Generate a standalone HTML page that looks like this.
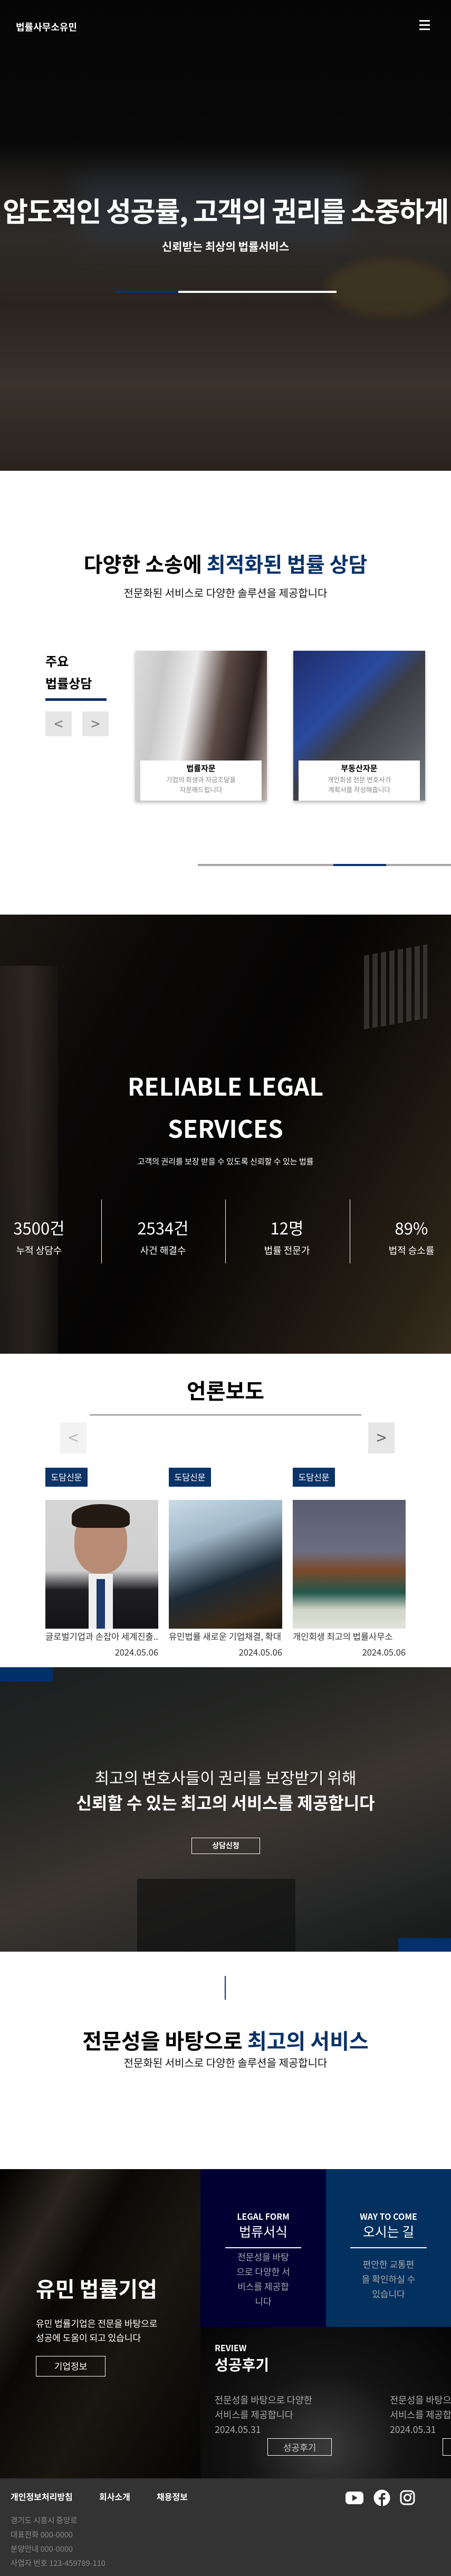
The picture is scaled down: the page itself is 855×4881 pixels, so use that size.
<!DOCTYPE html>
<html><head><meta charset="utf-8">
<style>
*{margin:0;padding:0;box-sizing:border-box}
body{width:855px;height:4881px;position:relative;font-family:"Noto Sans CJK KR","Liberation Sans",sans-serif;background:#fff;overflow:hidden}
.a{position:absolute}
.c{position:absolute;left:0;width:855px;text-align:center}
.blue{color:#0a3268}
.st{position:absolute;width:200px;text-align:center;color:#fff}
.st b{display:block;font-size:31px;font-weight:normal;line-height:40px}
.st i{display:block;font-style:normal;font-size:18px;margin-top:10px}
</style></head><body>

<!-- HERO -->
<div class="a" style="left:0;top:0;width:855px;height:892px;background:linear-gradient(180deg,#050505 0%,#080808 30%,#1e1d1c 38%,#2e2b28 50%,#29241f 65%,#3a322b 82%,#2a231d 100%)"></div>
<div class="a" style="left:150px;top:340px;width:520px;height:120px;background:#2f3945;opacity:.5;filter:blur(25px)"></div>
<div class="a" style="left:620px;top:490px;width:235px;height:110px;border-radius:50%;background:#4a3d20;opacity:.55;filter:blur(8px)"></div>
<div class="a" style="left:30px;top:38px;color:#fff;font-size:18px;font-weight:bold">법률사무소유민</div>
<div class="a" style="left:795px;top:38px;width:20px;height:3px;background:#fff;box-shadow:0 8px 0 #fff,0 16px 0 #fff"></div>
<div class="c" style="top:360px;color:#fff;font-size:52px;font-weight:bold;white-space:nowrap;letter-spacing:-1.5px;left:-20px;width:895px">압도적인 성공률, 고객의 권리를 소중하게</div>
<div class="c" style="top:452px;color:#fff;font-size:21px;font-weight:bold">신뢰받는 최상의 법률서비스</div>
<div class="a" style="left:218px;top:551px;width:120px;height:4px;background:#0a3268"></div>
<div class="a" style="left:338px;top:551px;width:300px;height:4px;background:#fff"></div>

<!-- SECTION 2 -->
<div class="c" style="top:1040px;font-size:39px;font-weight:bold;color:#000">다양한 소송에 <span class="blue">최적화된 법률 상담</span></div>
<div class="c" style="top:1108px;font-size:20px;color:#111">전문화된 서비스로 다양한 솔루션을 제공합니다</div>
<div class="a" style="left:86px;top:1231px;font-size:24px;font-weight:bold;line-height:42px;color:#000">주요<br>법률상담</div>
<div class="a" style="left:86px;top:1323px;width:116px;height:5px;background:#0a3268"></div>
<div class="a" style="left:86px;top:1348px;width:50px;height:47px;background:#e6e6e6;color:#777;font-size:30px;text-align:center;line-height:44px">&lt;</div>
<div class="a" style="left:156px;top:1348px;width:50px;height:47px;background:#e6e6e6;color:#777;font-size:30px;text-align:center;line-height:44px">&gt;</div>
<div class="a" style="left:256px;top:1233px;width:250px;height:284px;background:linear-gradient(100deg,#ddd 0%,#c9c9c9 20%,#eee 40%,#5c4b45 60%,#2a201d 80%,#c8b8b4 100%);box-shadow:0 4px 6px rgba(0,0,0,.25)"></div>
<div class="a" style="left:556px;top:1233px;width:250px;height:284px;background:linear-gradient(135deg,#1f2c6b 0%,#2a4aa0 35%,#3c3d45 50%,#55585e 75%,#7a8088 100%);box-shadow:0 4px 6px rgba(0,0,0,.25)"></div>
<div class="a" style="left:266px;top:1441px;width:230px;height:76px;background:#fff;text-align:center;padding-top:4px">
<div style="font-size:15px;font-weight:bold;color:#000;line-height:22px">법률자문</div>
<div style="font-size:12.5px;color:#888;line-height:19px">기업의 회생과 자금조달을<br>자문해드립니다</div></div>
<div class="a" style="left:566px;top:1441px;width:230px;height:76px;background:#fff;text-align:center;padding-top:4px">
<div style="font-size:15px;font-weight:bold;color:#000;line-height:22px">부동산자문</div>
<div style="font-size:12.5px;color:#888;line-height:19px">개인회생 전문 변호사가<br>계획서를 작성해줍니다</div></div>
<div class="a" style="left:375px;top:1637px;width:480px;height:4px;background:#aaa6a6"></div>
<div class="a" style="left:632px;top:1637px;width:100px;height:4px;background:#0a3268"></div>

<!-- DARK SECTION -->
<div class="a" style="left:0;top:1733px;width:855px;height:832px;background:linear-gradient(120deg,#1a1612 0%,#0b0908 25%,#050404 50%,#17130d 70%,#2a2216 90%,#3a2f1f 100%)"></div>
<div class="a" style="left:0;top:1830px;width:110px;height:735px;background:linear-gradient(90deg,#2a2521,#3d3630,#1a1714);opacity:.6"></div>
<div class="a" style="left:690px;top:1800px;width:120px;height:140px;background:repeating-linear-gradient(90deg,#555 0 10px,transparent 10px 16px);opacity:.5;transform:skewY(-10deg)"></div>
<div class="c" style="top:2017px;color:#fff;font-size:46px;font-weight:bold;line-height:80px">RELIABLE LEGAL<br>SERVICES</div>
<div class="c" style="top:2190px;color:#fff;font-size:15px">고객의 권리를 보장 받을 수 있도록 신뢰할 수 있는 법률</div>
<div class="a" style="left:192px;top:2273px;width:1px;height:121px;background:#fff"></div>
<div class="a" style="left:427px;top:2273px;width:1px;height:121px;background:#fff"></div>
<div class="a" style="left:663px;top:2273px;width:1px;height:121px;background:#fff"></div>
<div class="st" style="left:-26px;top:2306px"><b>3500건</b><i>누적 상담수</i></div>
<div class="st" style="left:209px;top:2306px"><b>2534건</b><i>사건 해결수</i></div>
<div class="st" style="left:444px;top:2306px"><b>12명</b><i>법률 전문가</i></div>
<div class="st" style="left:680px;top:2306px"><b>89%</b><i>법적 승소률</i></div>

<!-- PRESS -->
<div class="c" style="top:2604px;font-size:40px;font-weight:bold;color:#000">언론보도</div>
<div class="a" style="left:170px;top:2680px;width:515px;height:2px;background:#888"></div>
<div class="a" style="left:114px;top:2695px;width:50px;height:59px;background:#f2f2f2;color:#bbb;font-size:34px;text-align:center;line-height:56px">&lt;</div>
<div class="a" style="left:698px;top:2695px;width:50px;height:59px;background:#e6e6e6;color:#666;font-size:34px;text-align:center;line-height:56px">&gt;</div>
<div class="a" style="left:86px;top:2781px;width:80px;height:36px;background:#0a3468;color:#fff;font-size:16px;text-align:center;line-height:34px">도담신문</div>
<div class="a" style="left:320px;top:2781px;width:80px;height:36px;background:#0a3468;color:#fff;font-size:16px;text-align:center;line-height:34px">도담신문</div>
<div class="a" style="left:555px;top:2781px;width:80px;height:36px;background:#0a3468;color:#fff;font-size:16px;text-align:center;line-height:34px">도담신문</div>
<div class="a" style="left:86px;top:2842px;width:214px;height:244px;overflow:hidden;background:linear-gradient(180deg,#d5d5d5 0%,#cfcfcf 55%,#1e1e22 70%,#141418 100%)"><div style="position:absolute;left:55px;top:20px;width:100px;height:120px;border-radius:45%;background:#b88c74"></div><div style="position:absolute;left:50px;top:8px;width:110px;height:45px;border-radius:50% 50% 20% 20%;background:#241a14"></div><div style="position:absolute;left:82px;top:140px;width:46px;height:110px;background:#eee"></div><div style="position:absolute;left:97px;top:150px;width:16px;height:100px;background:#1e3a6a"></div></div>
<div class="a" style="left:320px;top:2842px;width:215px;height:244px;background:linear-gradient(160deg,#c9dbe6 0%,#9fb7c8 30%,#1d2a35 60%,#3a2a18 85%,#1a140e 100%)"></div>
<div class="a" style="left:555px;top:2842px;width:214px;height:244px;background:linear-gradient(180deg,#5a5c70 0%,#6b6d80 40%,#7a4a2c 55%,#23574a 72%,#cfd4c6 85%,#e2e4da 100%)"></div>
<div class="a" style="left:86px;top:3088px;width:214px;font-size:16.5px;color:#333;white-space:nowrap;overflow:hidden">글로벌기업과 손잡아 세계진출...</div>
<div class="a" style="left:320px;top:3088px;width:215px;font-size:16.5px;color:#333;white-space:nowrap;overflow:hidden">유민법률 새로운 기업채결, 확대</div>
<div class="a" style="left:555px;top:3088px;width:214px;font-size:16.5px;color:#333;white-space:nowrap;overflow:hidden">개인회생 최고의 법률사무소</div>
<div class="a" style="left:86px;top:3118px;width:214px;text-align:right;font-size:16.5px;color:#333">2024.05.06</div>
<div class="a" style="left:320px;top:3118px;width:215px;text-align:right;font-size:16.5px;color:#333">2024.05.06</div>
<div class="a" style="left:555px;top:3118px;width:214px;text-align:right;font-size:16.5px;color:#333">2024.05.06</div>

<!-- CTA -->
<div class="a" style="left:0;top:3159px;width:855px;height:539px;background:linear-gradient(160deg,#1c1f20 0%,#252624 30%,#3a3530 55%,#2a2a2a 75%,#151818 100%)"></div>
<div class="a" style="left:260px;top:3560px;width:300px;height:138px;background:#111;opacity:.7"></div>
<div class="a" style="left:0;top:3159px;width:100px;height:27px;background:#02306a"></div>
<div class="a" style="left:755px;top:3672px;width:100px;height:26px;background:#02306a"></div>
<div class="c" style="top:3345px;color:#fff;font-size:30px">최고의 변호사들이 권리를 보장받기 위해</div>
<div class="c" style="top:3392px;color:#fff;font-size:32px;font-weight:bold">신뢰할 수 있는 최고의 서비스를 제공합니다</div>
<div class="a" style="left:363px;top:3482px;width:130px;height:31px;border:1px solid #fff;color:#fff;font-size:14px;font-weight:bold;text-align:center;line-height:29px">상담신청</div>
<div class="a" style="left:426px;top:3744px;width:2px;height:45px;background:#0a3268"></div>
<div class="c" style="top:3836px;font-size:40px;font-weight:bold;color:#000">전문성을 바탕으로 <span class="blue">최고의 서비스</span></div>
<div class="c" style="top:3893px;font-size:20px;color:#111">전문화된 서비스로 다양한 솔루션을 제공합니다</div>

<!-- BOTTOM -->
<div class="a" style="left:0;top:4110px;width:380px;height:586px;background:linear-gradient(120deg,#000 0%,#2a251e 20%,#0a0908 35%,#1a1610 60%,#050505 100%)"></div>
<div class="a" style="left:380px;top:4110px;width:238px;height:299px;background:#000033"></div>
<div class="a" style="left:618px;top:4110px;width:237px;height:299px;background:#02305f"></div>
<div class="a" style="left:380px;top:4409px;width:475px;height:287px;background:radial-gradient(ellipse at 50% 80%,#3a3a3a 0%,#141414 45%,#050505 100%)"></div>
<div class="a" style="left:68px;top:4306px;color:#fff;font-size:40px;font-weight:bold">유민 법률기업</div>
<div class="a" style="left:68px;top:4388px;color:#fff;font-size:17px;line-height:27px">유민 법률기업은 전문을 바탕으로<br>성공에 도움이 되고 있습니다</div>
<div class="a" style="left:68px;top:4464px;width:132px;height:39px;border:1.5px solid #fff;color:#fff;font-size:17px;text-align:center;line-height:36px">기업정보</div>
<div class="a" style="left:380px;top:4187px;width:238px;text-align:center;color:#fff">
<div style="font-size:16px;font-weight:bold;line-height:24px">LEGAL FORM</div>
<div style="font-size:25px;line-height:34px">법류서식</div></div>
<div class="a" style="left:427px;top:4258px;width:144px;height:2px;background:#fff"></div>
<div class="a" style="left:380px;top:4262px;width:238px;text-align:center;color:#aaa;font-size:17px;line-height:28px">전문성을 바탕<br>으로 다양한 서<br>비스를 제공합<br>니다</div>
<div class="a" style="left:618px;top:4187px;width:237px;text-align:center;color:#fff">
<div style="font-size:16px;font-weight:bold;line-height:24px">WAY TO COME</div>
<div style="font-size:25px;line-height:34px">오시는 길</div></div>
<div class="a" style="left:664px;top:4258px;width:145px;height:2px;background:#fff"></div>
<div class="a" style="left:618px;top:4276px;width:237px;text-align:center;color:#aaa;font-size:17px;line-height:28px">편안한 교통편<br>을 확인하실 수<br>있습니다</div>
<div class="a" style="left:407px;top:4436px;color:#fff;font-size:16px;font-weight:bold">REVIEW</div>
<div class="a" style="left:407px;top:4460px;color:#fff;font-size:28px;font-weight:bold">성공후기</div>
<div class="a" style="left:380px;top:4530px;width:475px;height:130px;overflow:hidden">
<div class="a" style="left:27px;top:4px;color:#aaa;font-size:17.5px;line-height:28px;white-space:nowrap">전문성을 바탕으로 다양한<br>서비스를 제공합니다<br>2024.05.31</div>
<div class="a" style="left:359px;top:4px;color:#aaa;font-size:17.5px;line-height:28px;white-space:nowrap">전문성을 바탕으로 다양한<br>서비스를 제공합니다<br>2024.05.31</div>
<div class="a" style="left:127px;top:90px;width:122px;height:33px;border:1px solid #fff;color:#ccc;font-size:17px;text-align:center;line-height:31px">성공후기</div>
<div class="a" style="left:459px;top:90px;width:40px;height:33px;border:1px solid #fff"></div>
</div>

<!-- FOOTER -->
<div class="a" style="left:0;top:4696px;width:855px;height:185px;background:#333"></div>
<div class="a" style="left:20px;top:4718px;color:#fff;font-size:16px;font-weight:bold">개인정보처리방침</div>
<div class="a" style="left:188px;top:4718px;color:#fff;font-size:16px;font-weight:bold">회사소개</div>
<div class="a" style="left:297px;top:4718px;color:#fff;font-size:16px;font-weight:bold">채용정보</div>
<svg class="a" style="left:655px;top:4718px" width="34" height="30" viewBox="0 0 34 30"><rect x="0" y="3" width="34" height="24" rx="7" fill="#fff"/><path d="M13 9 L23 15 L13 21Z" fill="#333"/></svg>
<svg class="a" style="left:708px;top:4717px" width="32" height="32" viewBox="0 0 32 32"><circle cx="16" cy="16" r="15.5" fill="#fff"/><path d="M18 32 V19 H22 L22.6 15 H18 V12.5 C18 11.3 18.5 10.6 20 10.6 H22.7 V7 C22 6.9 20.8 6.8 19.5 6.8 C16 6.8 14 8.8 14 12.2 V15 H10 V19 H14 V32Z" fill="#333"/></svg>
<svg class="a" style="left:758px;top:4718px" width="29" height="29" viewBox="0 0 29 29"><rect x="2" y="2" width="25" height="25" rx="7" fill="none" stroke="#fff" stroke-width="3"/><circle cx="14.5" cy="14.5" r="6" fill="none" stroke="#fff" stroke-width="3"/><circle cx="21.5" cy="7.5" r="1.7" fill="#fff"/></svg>
<div class="a" style="left:20px;top:4762px;color:#888;font-size:14.5px;line-height:27px">경기도 시흥시 중앙로<br>대표전화 000-0000<br>분양안내 000-0000<br>사업자 번호 123-459789-110</div>
</body></html>
